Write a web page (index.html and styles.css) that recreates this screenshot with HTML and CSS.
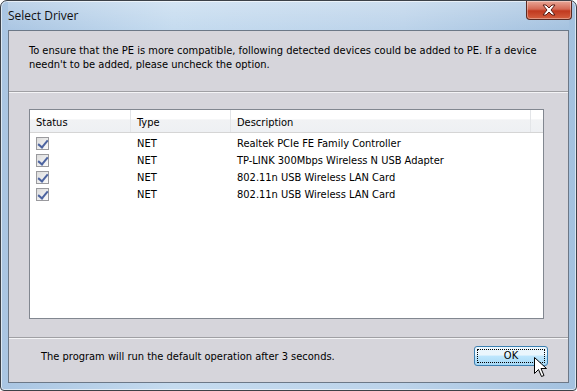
FILE: index.html
```html
<!DOCTYPE html>
<html lang="en">

<head>
	<meta charset="UTF-8">
	<title>Select Driver</title>
	<link rel="stylesheet" href="styles.css">
</head>

<body>
	<div class="window">
		<div class="titlebar">
			<span class="title">Select Driver</span>
			<div class="close">
				<svg width="16" height="12" viewBox="0 0 16 12">
					<path d="M2 1 L5 1 L8 4 L11 1 L14 1 L10 6 L14 11 L11 11 L8 8 L5 11 L2 11 L6 6 Z"
						fill="#fff" stroke="#5a1d14" stroke-width="1" stroke-linejoin="round" />
				</svg>
			</div>
		</div>
		<div class="client">
			<p class="intro">To ensure that the PE is more compatible, following detected devices could be added to PE. If a device needn't to be added, please uncheck the option.</p>
			<div class="sep"></div>
			<div class="list">
				<div class="head">
					<span class="col c-status">Status</span>
					<span class="col c-type">Type</span>
					<span class="col c-desc">Description</span>
					<span class="col c-fill"></span>
				</div>
				<div class="row">
					<span class="col c-status"><span class="check"></span></span>
					<span class="col c-type">NET</span>
					<span class="col c-desc">Realtek PCIe FE Family Controller</span>
				</div>
				<div class="row">
					<span class="col c-status"><span class="check"></span></span>
					<span class="col c-type">NET</span>
					<span class="col c-desc">TP-LINK 300Mbps Wireless N USB Adapter</span>
				</div>
				<div class="row">
					<span class="col c-status"><span class="check"></span></span>
					<span class="col c-type">NET</span>
					<span class="col c-desc">802.11n USB Wireless LAN Card</span>
				</div>
				<div class="row">
					<span class="col c-status"><span class="check"></span></span>
					<span class="col c-type">NET</span>
					<span class="col c-desc">802.11n USB Wireless LAN Card</span>
				</div>
			</div>
			<div class="sep lower"></div>
			<div class="footer">
				<span>The program will run the default operation after 3 seconds.</span>
				<div class="ok"><span class="focus">OK</span></div>
			</div>
		</div>
		<svg class="cursor" width="14" height="22" viewBox="0 0 14 22">
			<path d="M0.5 0.5 L0.5 16.5 L4.5 12.5 L7.5 19.5 L10 18.5 L7 11.5 L12.5 11.5 Z"
				fill="#fff" stroke="#000" stroke-width="1" stroke-linejoin="miter" />
		</svg>
	</div>
</body>

</html>
```

FILE: styles.css
```css
* {
	box-sizing: border-box;
}

body {
	margin: 0;
	width: 577px;
	height: 391px;
	background: #fff;
	font-family: "DejaVu Sans Condensed", "DejaVu Sans", sans-serif;
	font-size: 11px;
	color: #000;
}

.window {
	position: relative;
	width: 577px;
	height: 391px;
	border: 1px solid #3c4148;
	border-radius: 7px 7px 4px 4px;
	background: linear-gradient(to right, #a9c5e2, #c5dbef 30%, #bcd3ea 70%, #a3c1df);
	padding: 0 7px 7px 7px;
	display: flex;
	flex-direction: column;
	box-shadow: inset 0 0 0 1px rgba(255, 255, 255, 0.6);
}

.titlebar {
	height: 29px;
	display: flex;
	align-items: flex-start;
	justify-content: space-between;
	background: linear-gradient(to bottom, rgba(255, 255, 255, 0.25), rgba(255, 255, 255, 0));
}

.title {
	font-family: "Open Sans", "Noto Sans", sans-serif;
	font-size: 12px;
	margin-top: 6px;
	color: #111;
}

.close {
	width: 46px;
	height: 19px;
	margin-right: -3px;
	border: 1px solid #5b2a22;
	border-top: none;
	border-radius: 0 0 4px 4px;
	background: linear-gradient(to bottom, #e8a797, #d46a55 45%, #c1391f 55%, #d45f3f);
	display: flex;
	align-items: center;
	justify-content: center;
	box-shadow: inset 0 0 0 1px rgba(255, 255, 255, 0.35);
}

.client {
	flex: 1;
	background: #d6d5db;
	border: 1px solid #6c7887;
	display: flex;
	flex-direction: column;
}

.intro {
	margin: 0;
	padding: 13px 20px 0 20px;
	line-height: 14px;
	height: 60px;
}

.sep {
	height: 2px;
	border-top: 1px solid #a0a0a4;
	border-bottom: 1px solid #f4f4f6;
}

.list {
	margin: 16px 24px 0 20px;
	height: 210px;
	background: #fff;
	border: 1px solid #828790;
}

.head {
	display: flex;
	height: 23px;
	background: linear-gradient(to bottom, #fff 40%, #f1f2f4 45%, #eef0f3);
	border-bottom: 1px solid #d5d5d5;
}

.head .col {
	line-height: 25px;
	border-right: 1px solid #e3e5e8;
}

.col {
	padding-left: 6px;
	white-space: nowrap;
}

.c-status {
	width: 101px;
}

.c-type {
	width: 100px;
}

.c-desc {
	width: 300px;
}

.head .c-fill {
	flex: 1;
	border-right: none;
}

.row {
	display: flex;
	height: 17px;
	align-items: center;
}

.row:nth-child(2) {
	margin-top: 2px;
}

.check {
	display: block;
	width: 13px;
	height: 13px;
	border: 1px solid #9a9a9e;
	background: linear-gradient(135deg, #dcdcdc, #fbfbfb);
	position: relative;
}

.check::after {
	content: "";
	position: absolute;
	left: 3px;
	top: 0;
	width: 4px;
	height: 8px;
	border-right: 2px solid #4c63a0;
	border-bottom: 2px solid #4c63a0;
	transform: rotate(40deg);
}

.lower {
	margin-top: 18px;
}

.footer {
	display: flex;
	justify-content: space-between;
	align-items: center;
	padding: 7px 20px 0 32px;
}

.ok {
	width: 74px;
	height: 20px;
	border: 1px solid #3c7fb1;
	border-radius: 3px;
	background: linear-gradient(to bottom, #eaf6fd 45%, #bee6fd 50%, #a7d9f5);
	padding: 2px;
	display: flex;
}

.focus {
	flex: 1;
	border: 1px dotted #000;
	text-align: center;
	line-height: 12px;
}

.cursor {
	position: absolute;
	left: 533px;
	top: 356px;
}
```
